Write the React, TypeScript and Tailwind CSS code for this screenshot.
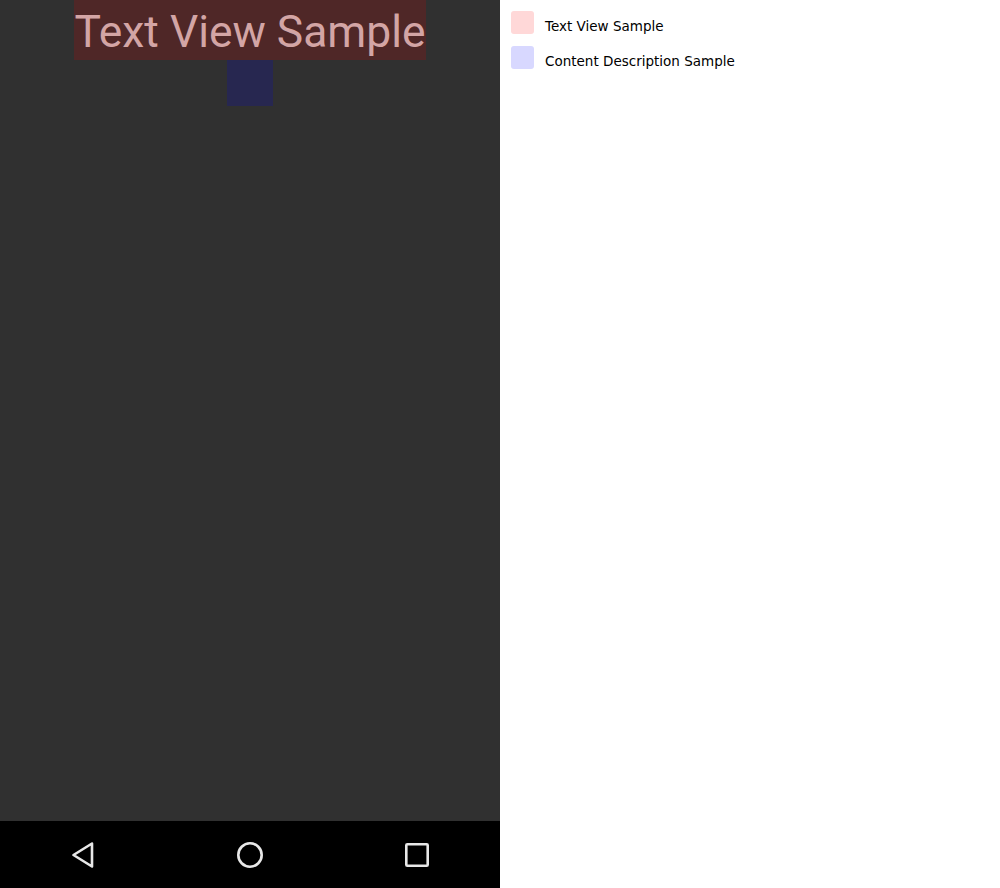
import React from "react";

export default function App() {
  return (
    <div className="flex w-[1000px] h-[888px] bg-white">
      <div className="flex flex-col w-[500px] h-[888px] bg-[#303030]">
        <div className="flex-1 flex flex-col items-center">
          <div
            className="h-[60px] pt-[4px] leading-[56px] bg-[#4f2727] text-[#d3a5a5] text-[44.4px] whitespace-nowrap"
            style={{ fontFamily: "Roboto, sans-serif" }}
          >
            Text View Sample
          </div>
          <div className="w-[46px] h-[46px] bg-[#272750]" />
        </div>
        <div className="h-[67px] bg-black flex items-center justify-around">
          <div className="w-[166px] flex justify-center">
            <svg width="26" height="28" viewBox="0 0 26 28" fill="none">
              <path d="M22 2.5 L3.5 14 L22 25.5 Z" stroke="#e8e8e8" strokeWidth="2.6" strokeLinejoin="round" />
            </svg>
          </div>
          <div className="w-[166px] flex justify-center">
            <svg width="28" height="28" viewBox="0 0 28 28" fill="none">
              <circle cx="14" cy="14" r="11.7" stroke="#e8e8e8" strokeWidth="2.6" />
            </svg>
          </div>
          <div className="w-[166px] flex justify-center">
            <svg width="26" height="26" viewBox="0 0 26 26" fill="none">
              <rect x="2.3" y="2.3" width="21.4" height="21.4" rx="1" stroke="#e8e8e8" strokeWidth="2.6" />
            </svg>
          </div>
        </div>
      </div>
      <div
        className="flex flex-col gap-[12px] pl-[11px] pt-[11px]"
        style={{ fontFamily: "'DejaVu Sans', sans-serif" }}
      >
        <div className="flex items-start gap-[11px]">
          <div className="w-[23px] h-[23px] rounded-[3px] bg-[#ffd8d8]" />
          <span className="mt-[7px] leading-[16px] text-[13.5px] text-black">Text View Sample</span>
        </div>
        <div className="flex items-start gap-[11px]">
          <div className="w-[23px] h-[23px] rounded-[3px] bg-[#d8d8ff]" />
          <span className="mt-[7px] leading-[16px] text-[13.5px] text-black">Content Description Sample</span>
        </div>
      </div>
    </div>
  );
}
